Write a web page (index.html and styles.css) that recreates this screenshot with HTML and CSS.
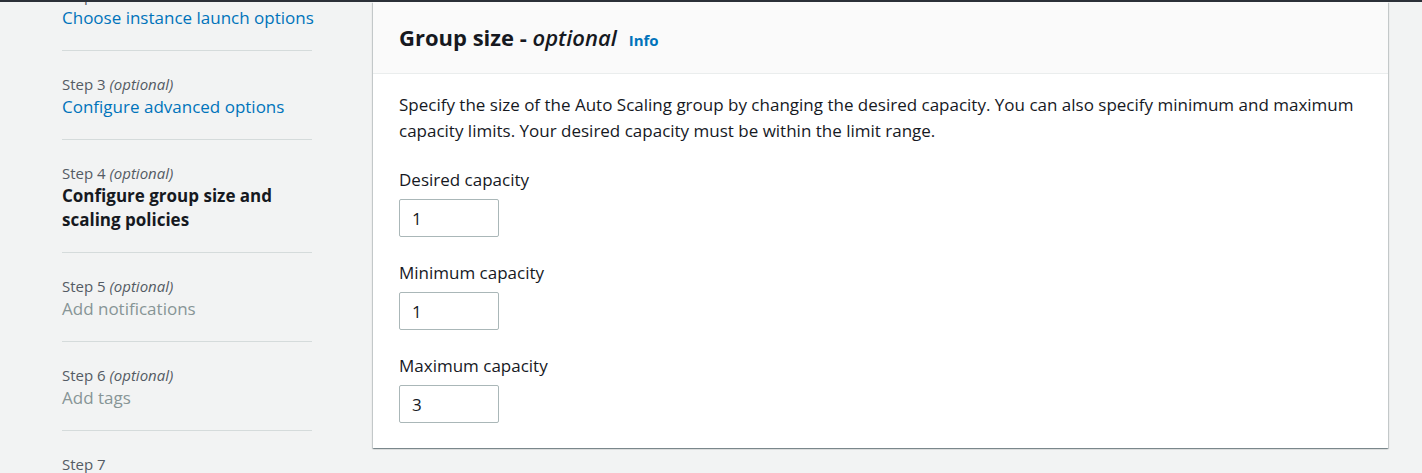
FILE: index.html
```html
<!DOCTYPE html>
<html lang="en">
<head>
<meta charset="utf-8">
<title>Group size</title>
<link rel="stylesheet" href="styles.css">
</head>
<body>
<div class="topbar"></div>
<div class="layout">
  <nav class="steps">
    <div class="step first">
      <div class="step-label">Step 2</div>
      <a class="step-title link" href="#">Choose instance launch options</a>
    </div>
    <div class="step">
      <div class="step-label">Step 3 <i>(optional)</i></div>
      <a class="step-title link" href="#">Configure advanced options</a>
    </div>
    <div class="step">
      <div class="step-label">Step 4 <i>(optional)</i></div>
      <div class="step-title current">Configure group size and scaling policies</div>
    </div>
    <div class="step">
      <div class="step-label">Step 5 <i>(optional)</i></div>
      <div class="step-title disabled">Add notifications</div>
    </div>
    <div class="step">
      <div class="step-label">Step 6 <i>(optional)</i></div>
      <div class="step-title disabled">Add tags</div>
    </div>
    <div class="step">
      <div class="step-label">Step 7</div>
      <div class="step-title disabled">Review</div>
    </div>
  </nav>
  <main class="panel">
    <header class="panel-header">
      <h2 class="panel-title">Group size - <i>optional</i></h2>
      <a class="info" href="#">Info</a>
    </header>
    <div class="panel-body">
      <p class="desc">Specify the size of the Auto Scaling group by changing the desired capacity. You can also specify minimum and maximum capacity limits. Your desired capacity must be within the limit range.</p>
      <div class="field">
        <label class="field-label" for="desired">Desired capacity</label>
        <input class="num" id="desired" type="text" value="1">
      </div>
      <div class="field">
        <label class="field-label" for="min">Minimum capacity</label>
        <input class="num" id="min" type="text" value="1">
      </div>
      <div class="field">
        <label class="field-label" for="max">Maximum capacity</label>
        <input class="num" id="max" type="text" value="3">
      </div>
    </div>
  </main>
</div>
</body>
</html>
```
FILE: styles.css
```css
html, body {
  margin: 0;
  padding: 0;
  height: 100%;
  overflow: hidden;
}
body {
  background: #f2f3f3;
  font-family: "Open Sans", "Noto Sans", sans-serif;
  color: #16191f;
}
.topbar {
  height: 2px;
  background: #2b3038;
  position: relative;
  z-index: 2;
}
.layout {
  display: flex;
  align-items: flex-start;
  padding-left: 62px;
  padding-right: 34px;
}
.steps {
  width: 250px;
  flex: none;
  margin-top: -40px;
}
.step {
  padding: 22px 0 20px;
  border-bottom: 1px solid #d5dbdb;
}
.step-label {
  font-size: 15px;
  line-height: 22px;
  color: #545b64;
}
.step-title {
  display: block;
  font-size: 17px;
  line-height: 24px;
  text-decoration: none;
}
.link { color: #0073bb; white-space: nowrap; }
.current { color: #16191f; font-weight: 700; }
.disabled { color: #879596; }
.panel {
  flex: 1;
  margin-left: 61px;
  background: #fff;
  box-shadow: 0 1px 1px 0 rgba(0,28,36,.3), 1px 1px 1px 0 rgba(0,28,36,.15), -1px 1px 1px 0 rgba(0,28,36,.15);
}
.panel-header {
  background: #fafafa;
  border-bottom: 1px solid #eaeded;
  padding: 21px 26px 22px;
  display: flex;
  align-items: baseline;
  gap: 12px;
}
.panel-title {
  margin: 0;
  font-size: 22px;
  line-height: 28px;
  font-weight: 700;
}
.panel-title i { font-weight: 600; }
.info {
  color: #0073bb;
  font-size: 15px;
  font-weight: 700;
  text-decoration: none;
}
.panel-body {
  padding: 18px 26px 25px;
}
.desc {
  margin: 0 0 24px;
  font-size: 17px;
  line-height: 26px;
}
.field + .field { margin-top: 24px; }
.field-label {
  display: block;
  font-size: 17px;
  line-height: 24px;
  margin-bottom: 7px;
}
.num {
  display: block;
  box-sizing: border-box;
  width: 100px;
  height: 38px;
  border: 1px solid #aab7b8;
  border-radius: 2px;
  padding: 0 12px;
  font-family: inherit;
  font-size: 17px;
  color: #16191f;
  background: #fff;
}
```
